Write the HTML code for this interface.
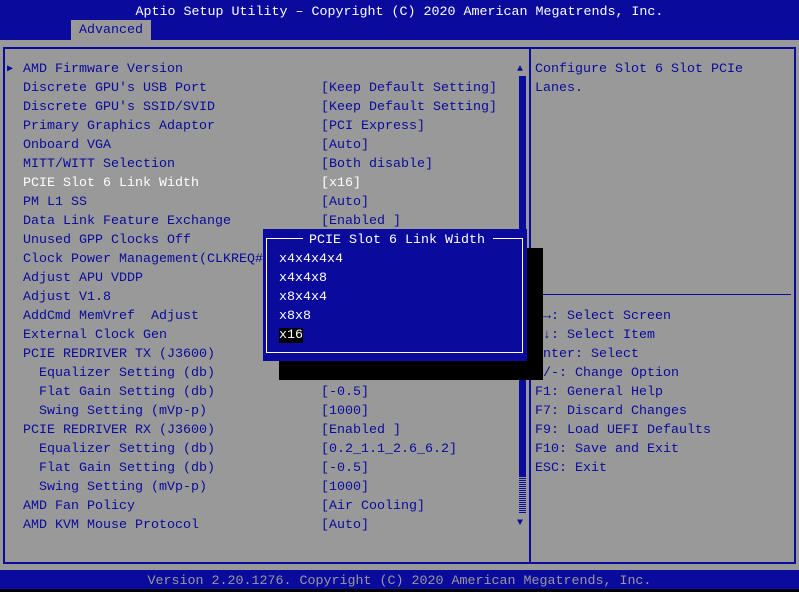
<!DOCTYPE html><html><head><style>
*{margin:0;padding:0}
body{width:799px;height:592px;background:#999;position:relative;overflow:hidden;font-family:"Liberation Mono","DejaVu Sans Mono",monospace;font-size:13.33px;color:#0a0a9c}
.t{position:absolute;line-height:19px;white-space:pre}
.b{position:absolute}
</style></head><body>
<div class="b" style="left:0;top:0;width:799px;height:40px;background:#0a0a9c"></div>
<div class="t" style="left:0;width:799px;text-align:center;top:3px;color:#fff">Aptio Setup Utility – Copyright (C) 2020 American Megatrends, Inc.</div>
<div class="b" style="left:71px;top:20px;width:80px;height:20px;background:#999"></div>
<div class="t" style="left:79px;top:21px">Advanced</div>
<div class="b" style="left:3px;top:47px;width:789px;height:513px;border:2px solid #0a0a9c"></div>
<div class="b" style="left:529px;top:47px;width:2px;height:515px;background:#0a0a9c"></div>
<div class="b" style="left:531px;top:294px;width:260px;height:1px;background:#0a0a9c"></div>
<div class="b" style="left:519px;top:76px;width:7px;height:400px;background:#0a0a9c"></div>
<div class="b" style="left:519px;top:476px;width:7px;height:37px;background:repeating-linear-gradient(0deg,#0a0a9c 0 1px,#999 1px 2px)"></div>
<div class="t" style="left:517px;top:60px;font-size:10px">▲</div>
<div class="t" style="left:517px;top:514px;font-size:10px">▼</div>
<div class="t" style="left:7px;top:60px;font-size:10px">▶</div>
<div class="t" style="left:23px;top:60px">AMD Firmware Version
Discrete GPU's USB Port
Discrete GPU's SSID/SVID
Primary Graphics Adaptor
Onboard VGA
MITT/WITT Selection
<span style="color:#fff">PCIE Slot 6 Link Width</span>
PM L1 SS
Data Link Feature Exchange
Unused GPP Clocks Off
Clock Power Management(CLKREQ#)
Adjust APU VDDP
Adjust V1.8
AddCmd MemVref  Adjust
External Clock Gen
PCIE REDRIVER TX (J3600)
  Equalizer Setting (db)
  Flat Gain Setting (db)
  Swing Setting (mVp-p)
PCIE REDRIVER RX (J3600)
  Equalizer Setting (db)
  Flat Gain Setting (db)
  Swing Setting (mVp-p)
AMD Fan Policy
AMD KVM Mouse Protocol</div>
<div class="t" style="left:321px;top:79px">[Keep Default Setting]
[Keep Default Setting]
[PCI Express]
[Auto]
[Both disable]
<span style="color:#fff">[x16]</span>
[Auto]
[Enabled ]
[Auto]
[Auto]
[Auto]
[Auto]
[Auto]
[Auto]
[Enabled ]
[0.2_1.1_2.6_6.2]
[-0.5]
[1000]
[Enabled ]
[0.2_1.1_2.6_6.2]
[-0.5]
[1000]
[Air Cooling]
[Auto]</div>
<div class="t" style="left:535px;top:60px">Configure Slot 6 Slot PCIe
Lanes.</div>
<div class="t" style="left:535px;top:307px">←→: Select Screen
↑↓: Select Item
Enter: Select
+/-: Change Option
F1: General Help
F7: Discard Changes
F9: Load UEFI Defaults
F10: Save and Exit
ESC: Exit</div>
<div class="b" style="left:279px;top:248px;width:264px;height:132px;background:#000"></div>
<div class="b" style="left:263px;top:229px;width:264px;height:132px;background:#0a0a9c"></div>
<div class="b" style="left:266px;top:238px;width:255px;height:113px;border:1px solid #fff"></div>
<div class="t" style="left:303px;top:231px;color:#fff;background:#0a0a9c;padding:0 8px 0 6px">PCIE Slot 6 Link Width</div>
<div class="t" style="left:279px;top:250px;color:#fff">x4x4x4x4
x4x4x8
x8x4x4
x8x8
<span style="background:#000">x16</span></div>
<div class="b" style="left:0;top:570px;width:799px;height:19px;background:#0a0a9c"></div>
<div class="b" style="left:0;top:589px;width:799px;height:3px;background:#000"></div>
<div class="t" style="left:0;width:799px;text-align:center;top:572px;color:#999">Version 2.20.1276. Copyright (C) 2020 American Megatrends, Inc.</div>
</body></html>
